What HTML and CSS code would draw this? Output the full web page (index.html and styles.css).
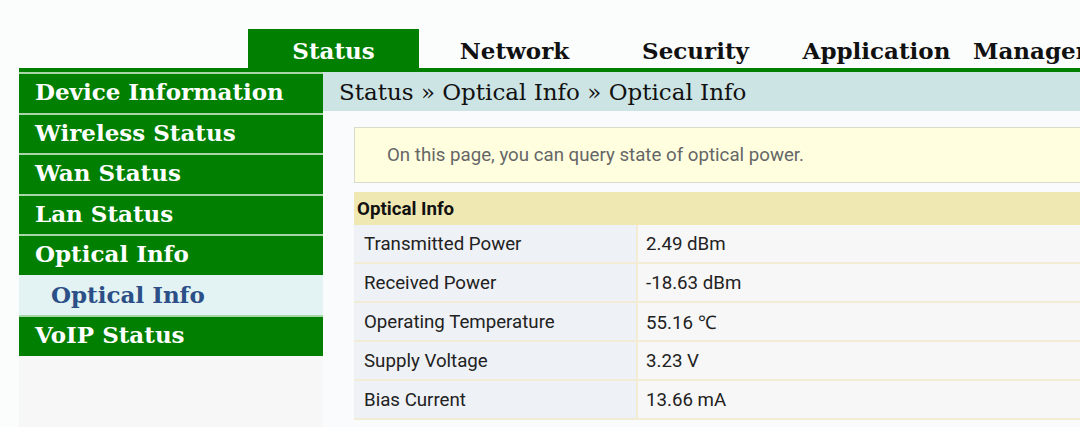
FILE: index.html
```html
<!DOCTYPE html>
<html>
<head>
<meta charset="utf-8">
<link rel="stylesheet" href="styles.css">
</head>
<body>
<div class="page">
  <div class="topnav">
    <div class="tab active">Status</div>
    <div class="tab">Network</div>
    <div class="tab">Security</div>
    <div class="tab">Application</div>
    <div class="tab">Management</div>
  </div>
  <div class="main">
    <div class="sidebar">
      <div class="item">Device Information</div>
      <div class="item">Wireless Status</div>
      <div class="item">Wan Status</div>
      <div class="item">Lan Status</div>
      <div class="item">Optical Info</div>
      <div class="item sub">Optical Info</div>
      <div class="item">VoIP Status</div>
      <div class="sidefill"></div>
    </div>
    <div class="content">
      <div class="crumb">Status » Optical Info » Optical Info</div>
      <div class="body">
        <div class="notice">On this page, you can query state of optical power.</div>
        <table class="info">
          <tr><th colspan="2">Optical Info</th></tr>
          <tr><td class="k">Transmitted Power</td><td class="v">2.49 dBm</td></tr>
          <tr><td class="k">Received Power</td><td class="v">-18.63 dBm</td></tr>
          <tr><td class="k">Operating Temperature</td><td class="v">55.16 ℃</td></tr>
          <tr><td class="k">Supply Voltage</td><td class="v">3.23 V</td></tr>
          <tr><td class="k">Bias Current</td><td class="v">13.66 mA</td></tr>
        </table>
      </div>
    </div>
  </div>
</div>
</body>
</html>
```
FILE: styles.css
```css
html, body {
  margin: 0;
  padding: 0;
  background: #fbfdfd;
  overflow: hidden;
}
.page {
  width: 1080px;
  height: 427px;
  overflow: hidden;
  padding-left: 19px;
  box-sizing: border-box;
}
.topnav {
  display: flex;
  gap: 10px;
  padding: 29px 0 0 229px;
  height: 39px;
  border-bottom: 4px solid #007f00;
  white-space: nowrap;
}
.tab {
  flex: 0 0 171px;
  height: 39px;
  line-height: 44px;
  text-align: center;
  font-family: "DejaVu Serif", serif;
  font-weight: bold;
  font-size: 23px;
  color: #111;
}
.tab.active {
  background: #007f00;
  color: #fff;
}
.main {
  display: flex;
  height: 355px;
}
.sidebar {
  width: 304px;
  flex: 0 0 304px;
  display: flex;
  flex-direction: column;
  background: #f7f7f7;
}
.item {
  height: 36px;
  line-height: 36px;
  padding-bottom: 2.5px;
  border-top: 2px solid #a8d6a8;
  background: #007f00;
  color: #fff;
  font-family: "DejaVu Serif", serif;
  font-weight: bold;
  font-size: 23px;
  padding-left: 16px;
  white-space: nowrap;
}
.item.sub {
  background: #e3f3f3;
  color: #2b4f86;
  border-top-color: #e3f3f3;
  padding-left: 32px;
}
.sidefill {
  flex: 1;
}
.content {
  flex: 1;
  background: #fafbfc;
  min-width: 0;
}
.crumb {
  height: 39px;
  line-height: 40px;
  background: #cde4e4;
  font-family: "DejaVu Serif", serif;
  font-size: 23px;
  color: #111;
  padding-left: 16px;
  white-space: nowrap;
}
.body {
  padding: 16px 0 0 31px;
}
.notice {
  height: 54px;
  line-height: 54px;
  background: #ffffe0;
  border: 1px solid #d9dccd;
  border-right: none;
  padding-left: 32px;
  font-family: Roboto, sans-serif;
  font-size: 18.7px;
  color: #666;
}
.info {
  margin-top: 9px;
  width: 100%;
  border-collapse: collapse;
  font-family: Roboto, sans-serif;
  font-size: 18.7px;
  color: #222;
}
.info th {
  height: 33px;
  padding: 0 0 0 3px;
  text-align: left;
  background: #f0e8b2;
  color: #111;
  font-weight: bold;
}
.info td {
  height: 37px;
  padding: 0 0 0 10px;
  border-bottom: 2px solid #f2ecd4;
}
.info td.k {
  width: 272px;
  background: #eef1f5;
  border-right: 2px solid #f2ecd4;
}
.info td.v {
  padding-left: 8px;
  background: #f7f7f7;
}
```
